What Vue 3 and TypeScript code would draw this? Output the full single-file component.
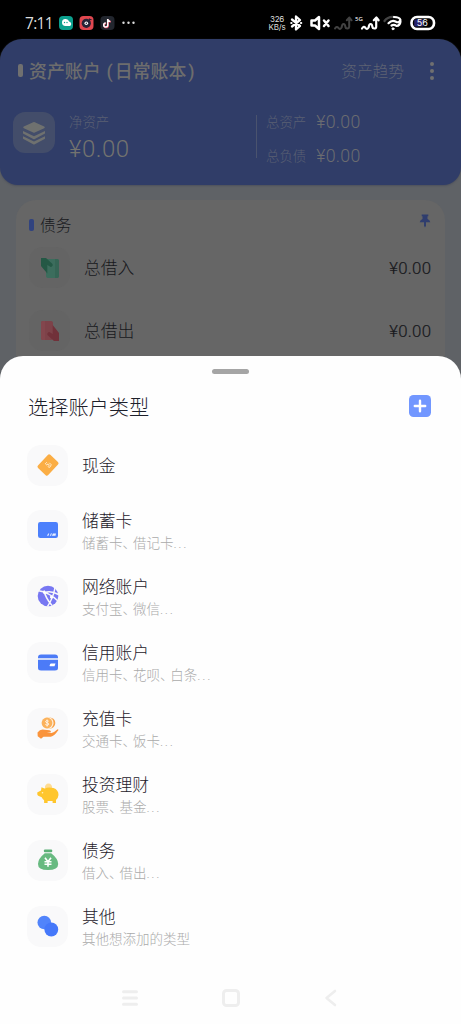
<script setup lang="ts">
interface AccountType {
  icon: string
  title: string
  hint?: string[]
}

const accountTypes: AccountType[] = [
  { icon: 'cash', title: '现金' },
  { icon: 'debit', title: '储蓄卡', hint: ['储蓄卡', '、', '借记卡', '...'] },
  { icon: 'network', title: '网络账户', hint: ['支付宝', '、', '微信', '...'] },
  { icon: 'credit', title: '信用账户', hint: ['信用卡', '、', '花呗', '、', '白条', '...'] },
  { icon: 'prepaid', title: '充值卡', hint: ['交通卡', '、', '饭卡', '...'] },
  { icon: 'invest', title: '投资理财', hint: ['股票', '、', '基金', '...'] },
  { icon: 'debt', title: '债务', hint: ['借入', '、', '借出', '...'] },
  { icon: 'other', title: '其他', hint: ['其他想添加的类型'] },
]

const debts = [
  { kind: 'in', label: '总借入', amount: '¥0.00' },
  { kind: 'out', label: '总借出', amount: '¥0.00' },
]

function partClass(part: string) {
  return { comma: part === '、', dots: part === '...' }
}
</script>

<template>
  <div class="screen">
    <header class="status">
      <span class="clock">7:11</span>
      <svg class="apps" width="80" height="16" viewBox="0 0 80 16">
        <rect x="0" y="1" width="14" height="14" rx="4" fill="#0b9f8d" />
        <path d="M3 7.4a3.6 3.3 0 0 1 7.1-.8A2.6 2.4 0 0 1 11 11H6.5A3.7 3.6 0 0 1 3 7.400Z" fill="#fff" />
        <circle cx="5.500" cy="7.500" r=".7" fill="#0b9f8d" /><circle cx="8" cy="7.500" r=".7" fill="#0b9f8d" />
        <rect x="20.500" y="1" width="14" height="14" rx="4" fill="#e0474f" />
        <circle cx="27.300" cy="8.300" r="4.600" fill="#252337" /><circle cx="27.300" cy="8.300" r="1.800" fill="#fff" />
        <path d="M30.500 3.500v4M30.500 4l2 .8" stroke="#252337" stroke-width="1.200" fill="none" />
        <circle cx="27.300" cy="8.300" r=".7" fill="#252337" />
        <rect x="41.500" y="1" width="14" height="14" rx="4" fill="#22262e" />
        <path d="M48.700 4v6a2 2 0 1 1-2-2M48.700 4.300q.6 2 2.600 2.100" fill="none" stroke="#e8405c" stroke-width="1.600" transform="translate(.5 .4)" />
        <path d="M48.700 4v6a2 2 0 1 1-2-2M48.700 4.300q.6 2 2.600 2.100" fill="none" stroke="#fff" stroke-width="1.500" />
        <g fill="#ddd"><circle cx="64.500" cy="7.700" r="1.200" /><circle cx="69.500" cy="7.700" r="1.200" /><circle cx="74.500" cy="7.700" r="1.200" /></g>
      </svg>
      <span class="speed"><span>326</span><span>KB/s</span></span>
      <svg class="signals" width="150" height="18" viewBox="0 0 150 18" fill="none" stroke="#fff" stroke-linecap="round" stroke-linejoin="round">
        <path d="M5 5.500l8 6.500-4 3.500v-13l4 3.500-8 6.500" stroke-width="2.300" />
        <path d="M4.300 9h.2M14 9h.2" stroke-width="2.200" />
        <path d="M24.500 6.500H28L32 3v12l-4-3.500h-3.500zM37 6.500l4.500 5.500M41.500 6.500L37 12" stroke-width="2.500" />
        <g stroke="#424242" stroke-width="2"><path d="M48 14.500q1.800-2.800 3.400-.6t3.200-.4q.5-3.500 2-3.500t1.800 3q.2 1.500 1.900 1.500t1.900-1.700V4.500M59.800 6.300l2.600-2.800 2.200 2.800" /></g>
        <path d="M75 14.500q1.800-2.800 3.400-.6t3.200-.4q.5-3.500 2-3.500t1.800 3q.2 1.500 1.900 1.500t1.900-1.700V4.500M86.800 6.300l2.600-2.800 2.200 2.800" stroke-width="2.200" />
        <path d="M97.500 7Q101 2.300 107 3" stroke="#444" stroke-width="2.300" />
        <path d="M101.500 9.200q3.500-3.700 7-1.700t5-1.500Q112.500 3 107 3M104.500 11.500q2.500-1.500 5 .5 3.500-.5 4-4.500" stroke-width="2.200" />
        <circle cx="106" cy="14.800" r="1" fill="#fff" />
        <rect x="124.500" y="3" width="22.500" height="12" rx="5.500" stroke-width="2.600" />
        <rect x="127.200" y="5.400" width="9" height="7.200" rx="1" fill="#28236d" stroke="none" />
        <text x="129.800" y="12.300" class="tiny">56</text>
        <text x="68" y="7" class="micro">5G</text>
      </svg>
    </header>

    <section class="hero">
      <div class="hero-top">
        <i class="mark"></i>
        <h1>资产账户<span class="open">(</span>日常账本<span class="close">)</span></h1>
        <span class="trend">资产趋势</span>
        <span class="more"><i></i><i></i><i></i></span>
      </div>
      <div class="hero-body">
        <div class="stack">
          <svg width="26" height="26" viewBox="0 0 26 26" fill="#6f716f">
            <path d="M12.200 2.300q.8-.4 1.600 0l9.400 4.300q1.400.8 0 1.600l-9.400 4.400q-.8.4-1.600 0L2.800 8.200q-1.400-.8 0-1.600z" />
            <path d="M2 11l11 5.200L24 11v2.500L13.800 19q-.8.400-1.600 0L2 13.500zM2 16.200l11 5.200 11-5.200v2.500l-10.200 5.500q-.8.400-1.600 0L2 18.700z" />
          </svg>
        </div>
        <div class="net">
          <span class="small">净资产</span>
          <span class="big">¥0.00</span>
        </div>
        <div class="totals">
          <div><span class="small">总资产</span><span class="sum">¥0.00</span></div>
          <div><span class="small">总负债</span><span class="sum">¥0.00</span></div>
        </div>
      </div>
    </section>

    <section class="card">
      <div class="card-head">
        <i class="mark"></i><h2>债务</h2>
        <svg class="pin" width="12" height="14" viewBox="0 0 12 14" fill="#2f3d6e">
          <path d="M2.700.5h6.600v1.800H8.500v2.700q2.300 1 2.800 3.300H7v3.500l-1 1.600-1-1.600V8.300H.7q.5-2.300 2.800-3.300V2.300h-.8z" />
        </svg>
      </div>
      <div v-for="d in debts" :key="d.kind" class="debt">
        <div class="debt-icon">
          <svg v-if="d.kind === 'in'" width="20" height="22" viewBox="0 0 20 22">
            <rect x="6" y="2" width="13" height="19" rx="2" fill="#3c6d5d" />
            <path d="M15 2h2a2 2 0 0 1 2 2v15a2 2 0 0 1-2 2h-2z" fill="#356555" />
            <path d="M1 1h5l6.500 6q.8 1.500-.6 2.600-1.200.8-2.400-.4L7.300 8v8.500L1 9z" fill="#245845" />
          </svg>
          <svg v-else width="20" height="22" viewBox="0 0 20 22">
            <rect x="1" y="1" width="12" height="19" rx="2" fill="#7d4249" />
            <path d="M1 3a2 2 0 0 1 2-2h2v19H3a2 2 0 0 1-2-2z" fill="#83464d" />
            <path d="M19 21h-5l-6.500-6q-.8-1.500.6-2.600 1.200-.8 2.400.4l2.200 1.200V5L19 13z" fill="#71313a" />
          </svg>
        </div>
        <span class="debt-label">{{ d.label }}</span>
        <span class="debt-amount">{{ d.amount }}</span>
      </div>
    </section>

    <section class="sheet">
      <i class="handle"></i>
      <div class="sheet-head">
        <h3>选择账户类型</h3>
        <svg width="22" height="22" viewBox="0 0 22 22">
          <rect width="22" height="22" rx="4.500" fill="#7297ff" />
          <path d="M11 5.800v10.400M5.800 11h10.400" stroke="#fff" stroke-width="2.400" stroke-linecap="round" />
        </svg>
      </div>
      <ul>
        <li v-for="t in accountTypes" :key="t.icon" :class="{ single: !t.hint }">
          <div class="tile">
            <svg width="24" height="24" viewBox="0 0 24 24">
              <g v-if="t.icon === 'cash'">
                <rect x="3" y="5" width="18" height="14" rx="1.800" fill="#fbae45" transform="rotate(-47 12 12)" />
                <path d="M10.800 9.200l-1.500 1.500 1.500 1.300 1.300-1.200 1.200 1.300-1.300 1.500M13.300 9.800l2 2-1.500 2.500-1.500-.3" fill="none" stroke="#fff2dc" stroke-width=".9" />
              </g>
              <g v-else-if="t.icon === 'debit'">
                <rect x="2" y="4" width="20" height="16" rx="2.200" fill="#4c80fc" />
                <path d="M11 17.700l1.200-2.300h1l-.7 2.300zM13.800 17.700l1.200-2.500h.8l-.7 2.500zM15.900 17.700l1-2.300H20l-.5 2.300z" fill="#e9efff" />
              </g>
              <g v-else-if="t.icon === 'network'">
                <circle cx="12" cy="12" r="10.300" fill="#7777f2" />
                <path d="M1.500 6.500Q13 8 22.500 17.500M8 6.500q1.500 7.500 8 15M19 3.500Q17.500 13.500 11.500 22.500M8.500 8.500q7-2 14 2" fill="none" stroke="#f9f9fa" stroke-width="1.500" />
                <circle cx="15.500" cy="13" r="1.600" fill="#fff" /><circle cx="8.500" cy="8.500" r="1.500" fill="#fff" />
              </g>
              <g v-else-if="t.icon === 'credit'">
                <path d="M2 7.500q0-3 3-3h14q3 0 3 3v.7H2zM2 9.700h20V18q0 2.500-3 2.500H5q-3 0-3-2.500z" fill="#4c7bf7" />
                <path d="M15 13.500h4.500l-1 2.800H14q-.6 0-.4-.7l.6-1.500q.2-.6.800-.6z" fill="#fff" />
              </g>
              <g v-else-if="t.icon === 'prepaid'">
                <circle cx="13.800" cy="7" r="5.500" fill="#f8a44b" />
                <circle cx="11.700" cy="7" r="5.900" fill="#fff1df" />
                <circle cx="11" cy="7" r="5.400" fill="#fbb25c" />
                <path d="M12.700 5.200q-2.800-1.300-3.200.3c0 1.600 3.400 1 3.200 2.700-.3 1.400-2.200 1.200-3.400.3M11.100 3.500v7" fill="none" stroke="#fff5e8" stroke-width="1" />
                <path d="M1.500 16.500q3-4 7-2.700l5 .5q2 .4 1.300 2l-4 .4 4.700.2q3.500-1.200 5.800-3.500 1.500-.2 1 .8-3.800 5.500-7.500 6.500H7.500l-2.500 2-3.300-2.500z" fill="#fa943c" />
              </g>
              <g v-else-if="t.icon === 'invest'">
                <path d="M9 6a3.600 3.600 0 1 1 7 0z" fill="#ffdc91" />
                <path d="M5.500 5.200l3 1.300q4-2 9-.4 5 1.800 5 7-.3 3.300-2.500 5v2.900h-3.400v-1.900h-5v1.900H8.100v-2.800q-1.500-1-2.400-3L2.200 13.700q-.9-.4-.9-1.400v-1.600q0-.6.8-.8L5 8.500z" fill="#ffc62d" />
                <circle cx="6.500" cy="10.700" r=".8" fill="#fff3c6" />
              </g>
              <g v-else-if="t.icon === 'debt'">
                <rect x="7.800" y="1.600" width="8.500" height="2.600" rx="1.200" fill="#5cb077" />
                <path d="M8.800 5.300h6.400q7 5.500 7 10.700 0 6-10.200 6T2 16q0-5.200 6.800-10.700z" fill="#68ba81" />
                <path d="M9 9.700l3 4 3-4M8.500 13.700h7M8.500 16.200h7M12 13.700v5" fill="none" stroke="#fff" stroke-width="1.600" />
              </g>
              <g v-else>
                <circle cx="8.300" cy="8.500" r="6.800" fill="#5184fb" />
                <circle cx="15.300" cy="15.500" r="6.900" fill="#4578fa" />
              </g>
            </svg>
          </div>
          <div class="copy">
            <span class="name">{{ t.title }}</span>
            <span v-if="t.hint" class="hint"><span v-for="(p, i) in t.hint" :key="i" :class="partClass(p)">{{ p }}</span></span>
          </div>
        </li>
      </ul>
      <nav>
        <svg width="18" height="18" viewBox="0 0 18 18"><path d="M2.500 2.800h13M2.500 9h13M2.500 15.200h13" stroke="#eee" stroke-width="3" stroke-linecap="round" /></svg>
        <svg width="18" height="18" viewBox="0 0 18 18"><rect x="1.500" y="1.500" width="15" height="15" rx="3" fill="none" stroke="#eee" stroke-width="3" /></svg>
        <svg width="18" height="18" viewBox="0 0 18 18"><path d="M13 2L4.500 9l8.500 7" fill="none" stroke="#eee" stroke-width="2.600" stroke-linecap="round" stroke-linejoin="round" /></svg>
      </nav>
    </section>
  </div>
</template>

<style>
body { margin: 0; background: #000; }
</style>

<style scoped>
* { box-sizing: border-box; }
h1, h2, h3, ul { margin: 0; padding: 0; font-weight: inherit; list-style: none; }
svg { display: block; flex: none; }
i { display: block; flex: none; }

.screen {
  position: relative;
  width: 461px;
  height: 1024px;
  overflow: hidden;
  background: linear-gradient(#000 0 60px, #5f6266 60px);
  font-family: Roboto, "Noto Sans CJK SC", sans-serif;
  font-weight: 300;
  white-space: nowrap;
}

.status {
  display: flex;
  align-items: center;
  height: 39px;
  padding: 6px 0 0 25px;
  background: #000;
  color: #ddd;
}
.clock { width: 34px; font: 400 15.5px/20px "Open Sans", sans-serif; letter-spacing: -0.7px; }
.speed {
  display: flex;
  flex-direction: column;
  align-items: center;
  width: 18px;
  margin-left: 129px;
  font: 400 8px/8px Inter, sans-serif;
  letter-spacing: -0.2px;
}
.signals { margin-left: 1px; }
.tiny { fill: #fff; stroke: none; font: 400 9px Inter, sans-serif; }
.micro { fill: #fff; stroke: none; font: 400 6px "Noto Sans", sans-serif; }

.hero {
  height: 146px;
  border-radius: 22px 22px 18px 18px;
  background: #303d68;
  box-shadow: 0 1px 2px #4d515c;
  color: #6d6d6d;
}
.hero-top { display: flex; align-items: center; height: 64px; padding: 0 27px 0 18px; }
.hero .mark { width: 5px; height: 13px; margin-top: -1px; border-radius: 2px; background: #707070; }
h1 { margin: 2px 0 0 6px; font-size: 17.900px; font-weight: 500; line-height: 24px; }
h1 .open { margin: 0 2px 0 6px; }
h1 .close { margin-left: 2px; }
.trend { margin: 2px 0 0 auto; font-size: 15.700px; line-height: 22px; color: #5e6373; }
.more { display: flex; flex-direction: column; gap: 3px; margin-left: 26px; }
.more i { width: 4px; height: 4px; border-radius: 50%; background: #707070; }
.hero-body { display: flex; padding: 8px 0 0 13px; }
.stack {
  display: flex;
  align-items: center;
  justify-content: center;
  width: 42px;
  height: 41px;
  margin-top: 1px;
  border-radius: 12px;
  background: #434d6a;
}
.net { display: flex; flex-direction: column; width: 187px; margin: 1px 0 0 14px; padding-top: 1px; }
.small { font-size: 13.400px; line-height: 20px; color: #5a6073; }
.big { margin-top: 2px; font-size: 24px; line-height: 28px; letter-spacing: 0.5px; color: #73736f; }
.totals {
  display: flex;
  flex-direction: column;
  gap: 14px;
  height: 43px;
  margin-top: 4px;
  padding-left: 9px;
  border-left: 1px solid #4a536e;
}
.totals div { display: flex; align-items: center; height: 20px; margin-top: -3px; flex: none; }
.totals div + div { margin-top: 0; }
.totals .small { padding-top: 1px; }
.sum { margin-left: 10px; font-size: 17.800px; line-height: 20px; letter-spacing: 0.3px; color: #6b6c70; }

.card {
  height: 200px;
  margin: 15px 16px 0;
  padding: 14px 14px 0 13px;
  border-radius: 20px;
  background: #666;
  color: #17181c;
}
.card-head { display: flex; align-items: center; height: 22px; }
.card .mark { width: 5px; height: 12px; margin-top: -1px; border-radius: 2px; background: #31437f; }
h2 { margin: 2px 0 0 6px; font-size: 15.700px; line-height: 22px; }
.pin { margin: -9px 0 0 auto; }
.debt { display: flex; align-items: center; height: 41px; margin-top: 11px; }
.debt + .debt { margin-top: 22px; }
.debt-icon {
  display: flex;
  align-items: center;
  justify-content: center;
  width: 41px;
  height: 41px;
  border-radius: 14px;
  background: #646464;
}
.debt-label { margin: 1px 0 0 14px; font-size: 16.800px; line-height: 24px; }
.debt-amount { margin: 0 -0.3px 0 auto; font-size: 16.800px; line-height: 24px; letter-spacing: 0.3px; -webkit-text-stroke: 0.2px #17181c; }

.sheet {
  position: absolute;
  inset: 356px 0 0;
  border-radius: 23px 23px 0 0;
  background: #fefefe;
  color: #1d202a;
}
.handle { width: 37px; height: 5px; margin: 13px auto 0; border-radius: 3px; background: #a5a5a5; }
.sheet-head {
  display: flex;
  align-items: center;
  justify-content: space-between;
  height: 30px;
  margin-top: 17px;
  padding: 0 30px 0 28px;
}
.sheet-head svg { margin-top: -1px; }
h3 { padding-top: 3px; font-size: 20.200px; line-height: 30px; }
ul { padding: 13px 27px 0; margin-top: 3px; }
li { display: flex; align-items: center; height: 66px; }
li.single { height: 64px; margin-top: -4px; }
.tile {
  display: flex;
  align-items: center;
  justify-content: center;
  width: 41px;
  height: 41px;
  border-radius: 14px;
  background: #f9f9fa;
}
.copy { display: flex; flex-direction: column; margin-left: 14px; }
.name { margin-top: 2px; font-size: 16.800px; line-height: 24px; }
.hint { height: 20px; font-size: 13.500px; line-height: 20px; color: #aaa; }
.comma { letter-spacing: -3.100px; }
.dots { letter-spacing: 1.700px; }
nav { display: flex; justify-content: space-between; width: 219px; margin: 30px 0 0 121px; }
</style>
